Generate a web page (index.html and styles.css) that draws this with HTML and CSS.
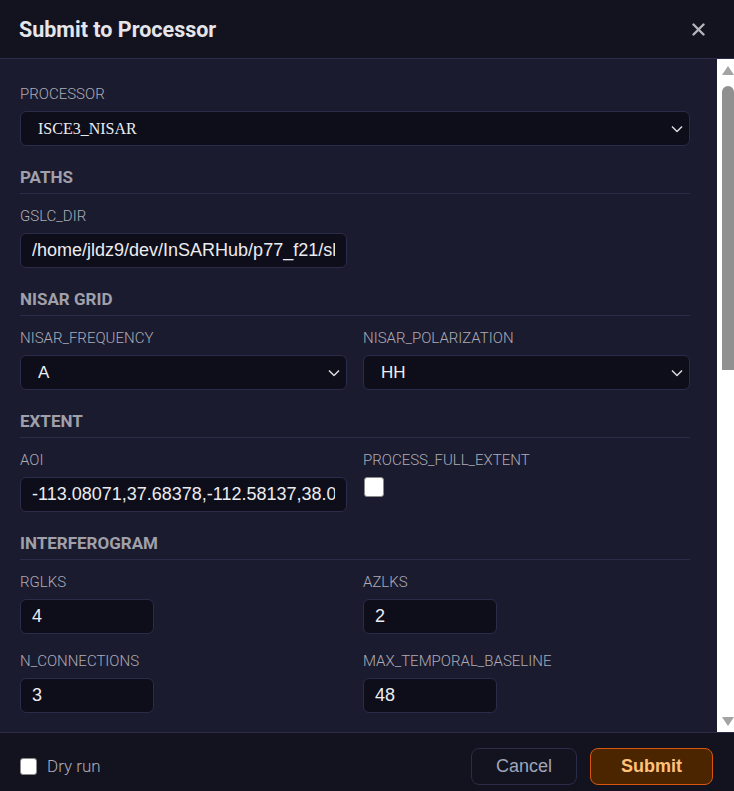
FILE: index.html
```html
<!DOCTYPE html>
<html lang="en">
  <head>
    <meta charset="UTF-8" />
    <title>Submit to Processor</title>
    <link rel="stylesheet" href="styles.css">
  </head>
  <body>
    <div class="modal">
      <div class="modal-header">
        <h2 class="modal-title">Submit to Processor</h2>
        <button class="close-btn" title="Close">
          <svg width="13" height="13" viewBox="0 0 13 13">
            <path d="M1.5 1.5 L11.5 11.5 M11.5 1.5 L1.5 11.5" stroke="#b4b4bc" stroke-width="2.4" stroke-linecap="round" />
          </svg>
        </button>
      </div>

      <div class="modal-body">
        <form class="form">
          <div class="field">
            <label for="processor">PROCESSOR</label>
            <div class="select-wrap">
              <select id="processor" class="select select-processor">
                <option>ISCE3_NISAR</option>
              </select>
              <svg class="chevron" width="12" height="7" viewBox="0 0 12 7">
                <polyline points="1,1 6,6 11,1" fill="none" stroke="#dcdce2" stroke-width="1.5" />
              </svg>
            </div>
          </div>

          <div class="section">
            <div class="section-title">PATHS</div>
            <div class="grid">
              <div class="field">
                <label for="gslc">GSLC_DIR</label>
                <input id="gslc" class="input" type="text" value="/home/jldz9/dev/InSARHub/p77_f21/slc">
              </div>
            </div>
          </div>

          <div class="section">
            <div class="section-title">NISAR GRID</div>
            <div class="grid">
              <div class="field">
                <label for="freq">NISAR_FREQUENCY</label>
                <div class="select-wrap">
                  <select id="freq" class="select">
                    <option>A</option>
                    <option>B</option>
                  </select>
                  <svg class="chevron" width="12" height="7" viewBox="0 0 12 7">
                    <polyline points="1,1 6,6 11,1" fill="none" stroke="#dcdce2" stroke-width="1.5" />
                  </svg>
                </div>
              </div>
              <div class="field">
                <label for="pol">NISAR_POLARIZATION</label>
                <div class="select-wrap">
                  <select id="pol" class="select">
                    <option>HH</option>
                    <option>HV</option>
                    <option>VH</option>
                    <option>VV</option>
                  </select>
                  <svg class="chevron" width="12" height="7" viewBox="0 0 12 7">
                    <polyline points="1,1 6,6 11,1" fill="none" stroke="#dcdce2" stroke-width="1.5" />
                  </svg>
                </div>
              </div>
            </div>
          </div>

          <div class="section">
            <div class="section-title">EXTENT</div>
            <div class="grid">
              <div class="field">
                <label for="aoi">AOI</label>
                <input id="aoi" class="input" type="text" value="-113.08071,37.68378,-112.58137,38.07412">
              </div>
              <div class="field">
                <label for="full">PROCESS_FULL_EXTENT</label>
                <input id="full" class="checkbox" type="checkbox">
              </div>
            </div>
          </div>

          <div class="section">
            <div class="section-title">INTERFEROGRAM</div>
            <div class="grid">
              <div class="field">
                <label for="rglks">RGLKS</label>
                <input id="rglks" class="input input-short" type="text" value="4">
              </div>
              <div class="field">
                <label for="azlks">AZLKS</label>
                <input id="azlks" class="input input-short" type="text" value="2">
              </div>
              <div class="field">
                <label for="nconn">N_CONNECTIONS</label>
                <input id="nconn" class="input input-short" type="text" value="3">
              </div>
              <div class="field">
                <label for="maxbl">MAX_TEMPORAL_BASELINE</label>
                <input id="maxbl" class="input input-short" type="text" value="48">
              </div>
            </div>
          </div>
        </form>

        <!-- scrollbar look of the original window -->
        <div class="scrollbar">
          <div class="scroll-arrow up"></div>
          <div class="scroll-thumb"></div>
          <div class="scroll-arrow down"></div>
        </div>
      </div>

      <div class="modal-footer">
        <label class="dry-run">
          <input class="checkbox checkbox-small" type="checkbox">
          <span>Dry run</span>
        </label>
        <div class="actions">
          <button class="btn btn-cancel">Cancel</button>
          <button class="btn btn-submit">Submit</button>
        </div>
      </div>
    </div>
  </body>
</html>
```

FILE: styles.css
```css
html,
body {
  margin: 0;
  height: 100%;
  overflow: hidden;
}
body {
  background: #13131f;
  font-family: Roboto, "Open Sans", sans-serif;
}

.modal {
  display: flex;
  flex-direction: column;
  height: 100vh;
  background: #1b1b2f;
}

/* header */
.modal-header {
  display: flex;
  align-items: center;
  justify-content: space-between;
  box-sizing: border-box;
  height: 59px;
  padding: 0 25px 0 19px;
  background: #13131f;
  border-bottom: 1px solid #2b2b4a;
}
.modal-title {
  margin: 0;
  font-size: 21.5px;
  font-weight: 700;
  color: #e6e6ea;
}
.close-btn {
  display: flex;
  padding: 4px;
  border: none;
  background: none;
  cursor: pointer;
}

/* body */
.modal-body {
  flex: 1;
  display: flex;
  min-height: 0;
}
.form {
  flex: 1;
  margin: 0;
  padding: 25px 27px 24px 20px;
  overflow-y: auto;
  scrollbar-width: none;
}
.section {
  margin-top: 21px;
}
.section-title {
  font-size: 17px;
  font-weight: 700;
  line-height: 21px;
  color: #a0a0aa;
  padding-bottom: 5px;
  border-bottom: 1px solid #2b2b4a;
  margin-bottom: 12px;
}
.grid {
  display: grid;
  grid-template-columns: 1fr 1fr;
  column-gap: 16px;
  row-gap: 17px;
}
.field label {
  display: block;
  font-size: 15px;
  font-weight: 300;
  line-height: 20px;
  color: #acacb6;
  margin-bottom: 7px;
}

.input,
.select {
  box-sizing: border-box;
  width: 100%;
  height: 35px;
  margin: 0;
  background: #0e0e1a;
  border: 1px solid #2b2b4a;
  border-radius: 6px;
  color: #ececf0;
  outline: none;
}
.input {
  padding: 0 11px;
  font-family: "Liberation Sans", Arial, sans-serif;
  font-size: 18px;
}
.input-short {
  width: 134px;
}
.select-wrap {
  position: relative;
}
.select {
  appearance: none;
  padding: 0 30px 0 17px;
  font-family: "Liberation Sans", Arial, sans-serif;
  font-size: 17px;
}
.select-processor {
  font-family: "Liberation Serif", "Times New Roman", serif;
  font-size: 16px;
}
.chevron {
  position: absolute;
  right: 7px;
  top: 50%;
  transform: translateY(-50%);
  pointer-events: none;
}

.checkbox {
  appearance: none;
  display: block;
  width: 20px;
  height: 20px;
  margin: 3px 0 0 1px;
  background: #fff;
  border: 1px solid #8a8a8a;
  border-radius: 3px;
}
.checkbox-small {
  width: 17px;
  height: 17px;
  margin: 0;
}

/* fake window scrollbar */
.scrollbar {
  display: flex;
  flex-direction: column;
  width: 17px;
  box-sizing: border-box;
  padding: 7px 0 6px 5px;
  background: #fff;
}
.scroll-arrow {
  width: 0;
  height: 0;
  border-left: 6px solid transparent;
  border-right: 6px solid transparent;
}
.scroll-arrow.up {
  border-bottom: 9px solid #a3a3a3;
}
.scroll-arrow.down {
  margin-top: auto;
  border-top: 9px solid #a3a3a3;
}
.scroll-thumb {
  width: 12px;
  height: 284px;
  margin-top: 11px;
  background: #909090;
  border-radius: 6px 6px 0 0;
}

/* footer */
.modal-footer {
  display: flex;
  align-items: center;
  justify-content: space-between;
  box-sizing: border-box;
  height: 59px;
  padding: 15px 21px 7px 20px;
  background: #13131f;
  border-top: 1px solid #2b2b4a;
}
.dry-run {
  display: flex;
  align-items: center;
  gap: 10px;
  font-size: 17px;
  font-weight: 300;
  color: #acacba;
}
.actions {
  display: flex;
  gap: 13px;
}
.btn {
  height: 37px;
  padding: 0 24px;
  border-radius: 8px;
  font-family: "Liberation Sans", Arial, sans-serif;
  font-size: 18px;
  cursor: pointer;
}
.btn-cancel {
  background: #13131f;
  border: 1px solid #2b2b4a;
  color: #9ea6ba;
}
.btn-submit {
  padding: 0 30px;
  background: #4a2500;
  border: 1px solid #d8570e;
  color: #ffc27a;
  font-weight: 700;
}
```
